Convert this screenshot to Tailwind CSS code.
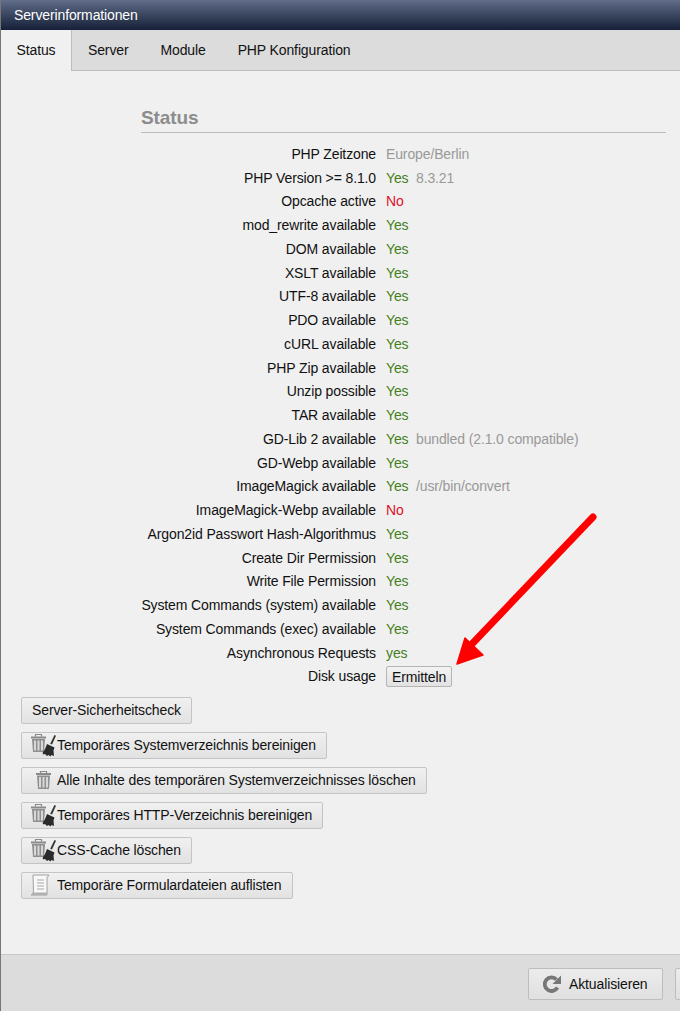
<!DOCTYPE html>
<html lang="de">
<head>
<meta charset="utf-8"/>
<meta name="viewport" content="width=device-width, initial-scale=1.0"/>
<title>Serverinformationen</title>
<script src="https://cdn.jsdelivr.net/npm/@tailwindcss/browser@4"></script>
</head>
<body class="bg-[#f0f0f0] font-['Liberation_Sans',Arial,sans-serif] text-[14px] tracking-[-0.125px] text-[#111]">
<div class="relative h-[1011px] w-[680px] overflow-hidden flex flex-col border-l border-[#777]">
  <!-- title bar -->
  <div class="h-[30px] shrink-0 flex items-center pl-[13px] text-[14px] text-white bg-gradient-to-b from-[#626e8a] to-[#162038]">Serverinformationen</div>

  <!-- tabs -->
  <div class="h-[41px] shrink-0 flex bg-[#dcdcdc] border-b border-[#bdbdbd]">
    <div class="w-[71px] h-[41px] flex items-center justify-center bg-[#f0f0f0] border-r border-[#bdbdbd]">Status</div>
    <div class="flex items-center pl-[16px]">Server</div>
    <div class="flex items-center pl-[32px]">Module</div>
    <div class="flex items-center pl-[32px]">PHP Konfiguration</div>
  </div>

  <div class="flex-1 min-h-0">
    <!-- status list -->
    <div class="ml-[140px] mr-[14px] mt-[35px] border-b border-[#bbb] h-[27px]">
      <h2 class="text-[19px] leading-[23px] font-bold tracking-[-0.1px] text-[#8c8c8c]">Status</h2>
    </div>
    <div class="mt-[9.6px] flex flex-col">
      <div class="flex h-[23.76px] items-center"><div class="w-[375px] text-right">PHP Zeitzone</div><div class="ml-[10px] text-[#999]">Europe/Berlin</div></div>
      <div class="flex h-[23.76px] items-center"><div class="w-[375px] text-right">PHP Version &gt;= 8.1.0</div><div class="ml-[10px] text-[#44801a]">Yes</div><div class="ml-[7.5px] text-[#999]">8.3.21</div></div>
      <div class="flex h-[23.76px] items-center"><div class="w-[375px] text-right">Opcache active</div><div class="ml-[10px] text-[#e0102a]">No</div></div>
      <div class="flex h-[23.76px] items-center"><div class="w-[375px] text-right">mod_rewrite available</div><div class="ml-[10px] text-[#44801a]">Yes</div></div>
      <div class="flex h-[23.76px] items-center"><div class="w-[375px] text-right">DOM available</div><div class="ml-[10px] text-[#44801a]">Yes</div></div>
      <div class="flex h-[23.76px] items-center"><div class="w-[375px] text-right">XSLT available</div><div class="ml-[10px] text-[#44801a]">Yes</div></div>
      <div class="flex h-[23.76px] items-center"><div class="w-[375px] text-right">UTF-8 available</div><div class="ml-[10px] text-[#44801a]">Yes</div></div>
      <div class="flex h-[23.76px] items-center"><div class="w-[375px] text-right">PDO available</div><div class="ml-[10px] text-[#44801a]">Yes</div></div>
      <div class="flex h-[23.76px] items-center"><div class="w-[375px] text-right">cURL available</div><div class="ml-[10px] text-[#44801a]">Yes</div></div>
      <div class="flex h-[23.76px] items-center"><div class="w-[375px] text-right">PHP Zip available</div><div class="ml-[10px] text-[#44801a]">Yes</div></div>
      <div class="flex h-[23.76px] items-center"><div class="w-[375px] text-right">Unzip possible</div><div class="ml-[10px] text-[#44801a]">Yes</div></div>
      <div class="flex h-[23.76px] items-center"><div class="w-[375px] text-right">TAR available</div><div class="ml-[10px] text-[#44801a]">Yes</div></div>
      <div class="flex h-[23.76px] items-center"><div class="w-[375px] text-right">GD-Lib 2 available</div><div class="ml-[10px] text-[#44801a]">Yes</div><div class="ml-[7.5px] text-[#999]">bundled (2.1.0 compatible)</div></div>
      <div class="flex h-[23.76px] items-center"><div class="w-[375px] text-right">GD-Webp available</div><div class="ml-[10px] text-[#44801a]">Yes</div></div>
      <div class="flex h-[23.76px] items-center"><div class="w-[375px] text-right">ImageMagick available</div><div class="ml-[10px] text-[#44801a]">Yes</div><div class="ml-[7.5px] text-[#999]">/usr/bin/convert</div></div>
      <div class="flex h-[23.76px] items-center"><div class="w-[375px] text-right">ImageMagick-Webp available</div><div class="ml-[10px] text-[#e0102a]">No</div></div>
      <div class="flex h-[23.76px] items-center"><div class="w-[375px] text-right">Argon2id Passwort Hash-Algorithmus</div><div class="ml-[10px] text-[#44801a]">Yes</div></div>
      <div class="flex h-[23.76px] items-center"><div class="w-[375px] text-right">Create Dir Permission</div><div class="ml-[10px] text-[#44801a]">Yes</div></div>
      <div class="flex h-[23.76px] items-center"><div class="w-[375px] text-right">Write File Permission</div><div class="ml-[10px] text-[#44801a]">Yes</div></div>
      <div class="flex h-[23.76px] items-center"><div class="w-[375px] text-right">System Commands (system) available</div><div class="ml-[10px] text-[#44801a]">Yes</div></div>
      <div class="flex h-[23.76px] items-center"><div class="w-[375px] text-right">System Commands (exec) available</div><div class="ml-[10px] text-[#44801a]">Yes</div></div>
      <div class="flex h-[23.76px] items-center"><div class="w-[375px] text-right">Asynchronous Requests</div><div class="ml-[10px] text-[#44801a]">yes</div></div>
      <div class="flex h-[23.76px] items-center"><div class="w-[375px] text-right">Disk usage</div><button class="ml-[10px] h-[21px] w-[66px] rounded-[2px] border border-[#b5b5b5] bg-gradient-to-b from-[#f2f2f2] to-[#e2e2e2] text-center">Ermitteln</button></div>
    </div>

    <!-- action buttons -->
    <div class="mt-[8px] ml-[20px] flex flex-col items-start gap-[8px]">
      <button class="h-[27px] w-[171px] rounded-[2px] border border-[#c4c4c4] bg-gradient-to-b from-[#f0f0f0] to-[#e2e2e2] text-center">Server-Sicherheitscheck</button>
      <button class="h-[27px] w-[306px] flex items-center rounded-[2px] border border-[#c4c4c4] bg-gradient-to-b from-[#f0f0f0] to-[#e2e2e2]">
        <svg class="ml-[8px] shrink-0" width="27" height="25" viewBox="0 0 27 25"><path d="M1 4.500h15" stroke="#8a8a8a" stroke-width="2"/><path d="M5.500 3.500V1.500h6v2" fill="none" stroke="#8a8a8a" stroke-width="1.200"/><path d="M2 6h13l-1 13H3z" fill="#8f8f8f"/><path d="M5 7.500V17.500M8.500 7.500V17.500M12 7.500V17.500" stroke="#d8d8d8" stroke-width="2"/><path d="M24.500 2l1.500.8-4 8.700-1.800-.8z" fill="#333"/><path d="M17 11l7.500 3.500-1 3 .5 5.500-2.500-1-1 1.500-2-1.500-1.500 1-2-2-1.500.5-1-1.500 2.500-4z" fill="#2b2b2b"/></svg>
        <span class="whitespace-nowrap">Temporäres Systemverzeichnis bereinigen</span>
      </button>
      <button class="h-[27px] w-[406px] flex items-center rounded-[2px] border border-[#c4c4c4] bg-gradient-to-b from-[#f0f0f0] to-[#e2e2e2]">
        <svg class="ml-[13px] shrink-0" width="22" height="20" viewBox="0 0 22 20"><path d="M1 4h15" stroke="#8a8a8a" stroke-width="2"/><path d="M5.500 3V1.500h6V3" fill="none" stroke="#8a8a8a" stroke-width="1.200"/><path d="M2 5.500h13l-1 13.500H3z" fill="#8f8f8f"/><path d="M5 7V17.500M8.500 7V17.500M12 7V17.500" stroke="#d8d8d8" stroke-width="2"/></svg>
        <span class="whitespace-nowrap">Alle Inhalte des temporären Systemverzeichnisses löschen</span>
      </button>
      <button class="h-[27px] w-[302px] flex items-center rounded-[2px] border border-[#c4c4c4] bg-gradient-to-b from-[#f0f0f0] to-[#e2e2e2]">
        <svg class="ml-[8px] shrink-0" width="27" height="25" viewBox="0 0 27 25"><path d="M1 4.500h15" stroke="#8a8a8a" stroke-width="2"/><path d="M5.500 3.500V1.500h6v2" fill="none" stroke="#8a8a8a" stroke-width="1.200"/><path d="M2 6h13l-1 13H3z" fill="#8f8f8f"/><path d="M5 7.500V17.500M8.500 7.500V17.500M12 7.500V17.500" stroke="#d8d8d8" stroke-width="2"/><path d="M24.500 2l1.500.8-4 8.700-1.800-.8z" fill="#333"/><path d="M17 11l7.500 3.500-1 3 .5 5.500-2.500-1-1 1.500-2-1.500-1.500 1-2-2-1.500.5-1-1.500 2.500-4z" fill="#2b2b2b"/></svg>
        <span class="whitespace-nowrap">Temporäres HTTP-Verzeichnis bereinigen</span>
      </button>
      <button class="h-[27px] w-[171px] flex items-center rounded-[2px] border border-[#c4c4c4] bg-gradient-to-b from-[#f0f0f0] to-[#e2e2e2]">
        <svg class="ml-[8px] shrink-0" width="27" height="25" viewBox="0 0 27 25"><path d="M1 4.500h15" stroke="#8a8a8a" stroke-width="2"/><path d="M5.500 3.500V1.500h6v2" fill="none" stroke="#8a8a8a" stroke-width="1.200"/><path d="M2 6h13l-1 13H3z" fill="#8f8f8f"/><path d="M5 7.500V17.500M8.500 7.500V17.500M12 7.500V17.500" stroke="#d8d8d8" stroke-width="2"/><path d="M24.500 2l1.500.8-4 8.700-1.800-.8z" fill="#333"/><path d="M17 11l7.500 3.500-1 3 .5 5.500-2.500-1-1 1.500-2-1.500-1.500 1-2-2-1.500.5-1-1.500 2.500-4z" fill="#2b2b2b"/></svg>
        <span class="whitespace-nowrap">CSS-Cache löschen</span>
      </button>
      <button class="h-[27px] w-[272px] flex items-center rounded-[2px] border border-[#c4c4c4] bg-gradient-to-b from-[#f0f0f0] to-[#e2e2e2]">
        <svg class="ml-[8px] shrink-0" width="27" height="23" viewBox="0 0 27 23"><path d="M3 1h16l-2 2.500V21H1C2.500 20 3.500 18.500 3.500 17z" fill="#f8f8f8" stroke="#a0a0a0" stroke-width="1"/><path d="M3 18.500L1 21h15.500l.5-2.500z" fill="#b0b0b0"/><path d="M7 6h7M7 9h7M7 12h7M7 15h7" stroke="#a8a8a8" stroke-width="1"/></svg>
        <span class="whitespace-nowrap">Temporäre Formulardateien auflisten</span>
      </button>
    </div>
  </div>

  <!-- footer -->
  <div class="h-[57px] shrink-0 bg-[#dcdcdc] border-t border-[#c8c8c8] flex items-start pl-[527px] pt-[13px] gap-[12px]">
    <button class="h-[32px] w-[135px] shrink-0 flex items-center rounded-[2px] border border-[#bdbdbd] bg-gradient-to-b from-[#ececec] to-[#e0e0e0]">
      <svg class="ml-[14px] shrink-0" width="19" height="19" viewBox="0 0 19 19"><path d="M14.500 12.500A6.800 6.800 0 1 1 13.500 4.500" fill="none" stroke="#777" stroke-width="3.800"/><path d="M18 .5V9h-8.500z" fill="#777"/></svg>
      <span class="ml-[7px] whitespace-nowrap">Aktualisieren</span>
    </button>
    <button class="h-[32px] w-[60px] shrink-0 rounded-[2px] border border-[#bdbdbd] bg-gradient-to-b from-[#ececec] to-[#e0e0e0]"></button>
  </div>

  <!-- red arrow drawn on top of the screenshot -->
  <svg class="absolute left-[-1px] top-0 pointer-events-none" width="680" height="1011" viewBox="0 0 680 1011">
    <path d="M593 517L471 645" stroke="#ff0000" stroke-width="7" stroke-linecap="round"/>
    <path d="M465 638L483 655L457 664z" fill="#ff0000" stroke="#ff0000" stroke-width="1.500" stroke-linejoin="round"/>
  </svg>
</div>
</body>
</html>
